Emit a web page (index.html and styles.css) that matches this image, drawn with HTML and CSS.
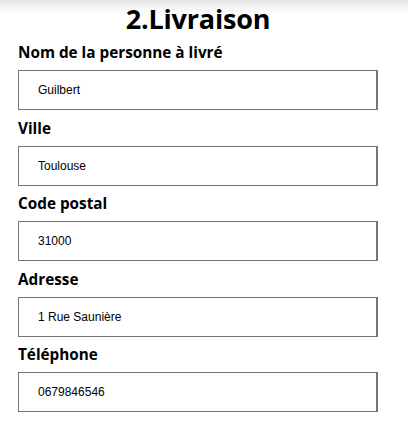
FILE: index.html
```html
<!DOCTYPE html>
<html lang="fr">
<head>
<meta charset="utf-8">
<title>Livraison</title>
<link rel="stylesheet" href="styles.css">
</head>
<body>
<div class="page">
  <h2 class="title">2.Livraison</h2>
  <form class="form">
    <div class="field">
      <label class="label" for="nom">Nom de la personne à livré</label>
      <input class="input" id="nom" type="text" value="Guilbert">
    </div>
    <div class="field">
      <label class="label" for="ville">Ville</label>
      <input class="input" id="ville" type="text" value="Toulouse">
    </div>
    <div class="field">
      <label class="label" for="cp">Code postal</label>
      <input class="input" id="cp" type="text" value="31000">
    </div>
    <div class="field">
      <label class="label" for="adr">Adresse</label>
      <input class="input" id="adr" type="text" value="1 Rue Saunière">
    </div>
    <div class="field">
      <label class="label" for="tel">Téléphone</label>
      <input class="input" id="tel" type="text" value="0679846546">
    </div>
  </form>
</div>
</body>
</html>
```

FILE: styles.css
```css
html, body {
  margin: 0;
  padding: 0;
}
body {
  background: linear-gradient(to bottom, #e4e4e4 0px, #f6f6f6 8px, #ffffff 16px) no-repeat;
  background-color: #ffffff;
  font-family: "Open Sans", "DejaVu Sans", sans-serif;
  color: #000;
}
.page {
  width: 396px;
  height: 422px;
  overflow: hidden;
}
.title {
  margin: 0;
  padding-top: 1px;
  text-align: center;
  font-size: 27px;
  line-height: 36px;
  font-weight: 700;
  letter-spacing: -0.2px;
}
.form {
  display: flex;
  flex-direction: column;
  padding: 0 18px;
}
.field {
  display: flex;
  flex-direction: column;
  height: 75.5px;
}
.label {
  font-size: 15.3px;
  line-height: 20px;
  font-weight: 700;
  margin-top: 5px;
  margin-bottom: 8px;
}
.input {
  box-sizing: border-box;
  width: 360px;
  height: 40px;
  margin: 0;
  padding: 0 0 0 19px;
  border: 1px solid #767676;
  border-right-width: 2px;
  background: #fff;
  font-family: "Liberation Sans", Arial, sans-serif;
  font-size: 12px;
  color: #000;
  outline: none;
}
```
